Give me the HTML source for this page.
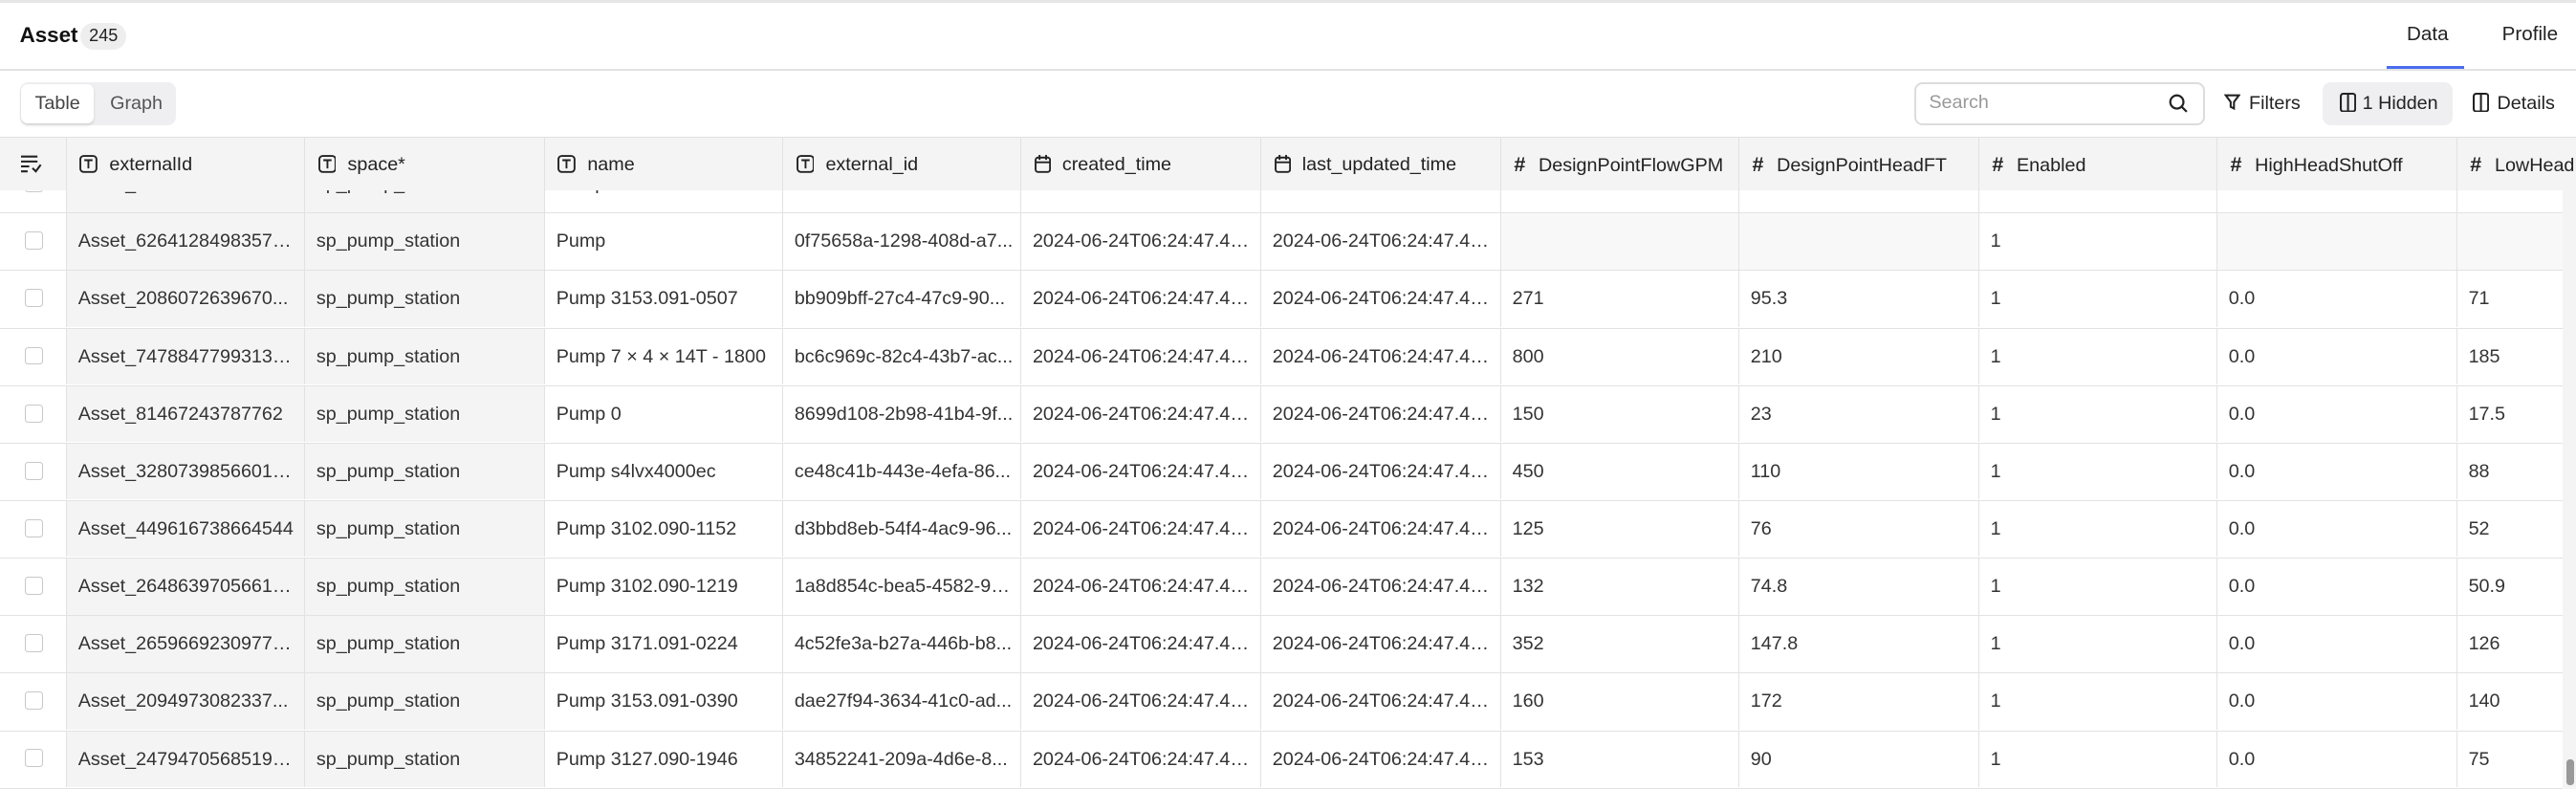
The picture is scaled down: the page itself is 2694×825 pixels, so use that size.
<!DOCTYPE html>
<html><head><meta charset="utf-8"><style>
html{zoom:1.7181}
*{box-sizing:border-box;margin:0;padding:0}
body{width:1568px;height:480px;overflow:hidden;background:#fff;font-family:"Liberation Sans",Arial,sans-serif;color:#333;position:relative;font-size:11.5px}
.abs{position:absolute}
.topline{left:0;top:0;width:1568px;height:2px;background:#e6e6e6}
.hdiv{left:0;top:42px;width:1568px;height:1px;background:#e2e2e2}
.title{left:12px;top:14px;font-size:13px;color:#111;font-weight:bold}
.badge{left:49px;top:14px;width:28px;height:16px;border-radius:8px;background:#eeeeef;font-size:10.5px;text-align:center;line-height:16px;color:#222}
.tab{top:14px;font-size:12px;color:#222}
.uline{left:1453px;top:40px;width:47px;height:2px;background:#4a6cf0}
.toggle{left:12px;top:50px;width:95px;height:26px;border-radius:5px;background:#efeff1}
.tbtn{left:13px;top:51px;width:44px;height:24px;border-radius:4px;background:#fff;box-shadow:0 1px 2px rgba(0,0,0,.12);font-size:11.5px;line-height:24px;text-align:center;color:#444}
.gbtn{left:67px;top:51px;font-size:11.5px;line-height:24px;color:#555}
.search{left:1165px;top:50px;width:177px;height:26px;border:1.5px solid #dcdcdc;border-radius:5px;font-size:11.5px;color:#999;padding:5px 8px}
.tb{top:50px;height:26px;line-height:26px;font-size:11.5px;color:#222}
.hidden{left:1414px;width:79px;background:#efeff1;border-radius:5px}
.thead{left:0;top:83px;width:1568px;height:33px;background:#f4f4f4;border-top:1px solid #e0e0e0;z-index:5}
.th{position:absolute;top:0;height:33px;line-height:33px;font-size:11.5px;color:#222;padding-left:8px;border-left:1px solid #e2e2e2;white-space:nowrap;overflow:hidden}
.th svg{vertical-align:-2px;margin-right:7px}
.row{position:absolute;left:0;width:1560px;height:35px;border-bottom:1px solid #e2e2e2}
.td{position:absolute;top:0;height:34px;line-height:34px;padding-left:7px;padding-right:4px;border-left:1px solid #e2e2e2;white-space:nowrap;overflow:hidden;text-overflow:ellipsis;font-size:11.5px;color:#333}
.g{background:#f4f4f4}
.e{background:#f8f8f8}
.cb{position:absolute;left:15px;top:11px;width:11px;height:11px;border:1px solid #c8c8c8;border-radius:2px;background:#fff}
.sb{left:1560px;top:116px;width:8px;height:364px;background:#f4f4f4}
.thumb{left:1562px;top:462px;width:5px;height:16px;background:#999;border-radius:2px}
</style></head><body>
<div class="abs topline"></div>
<div class="abs title">Asset</div>
<div class="abs badge">245</div>
<div class="abs tab" style="left:1465px">Data</div>
<div class="abs tab" style="left:1523px">Profile</div>
<div class="abs uline"></div>
<div class="abs hdiv"></div>
<div class="abs toggle"></div>
<div class="abs tbtn">Table</div>
<div class="abs gbtn">Graph</div>
<div class="abs search">Search
<svg class="abs" style="left:154px;top:6px" width="12" height="12" viewBox="0 0 12 12" fill="none" stroke="#222" stroke-width="1.3"><circle cx="5" cy="5" r="4"/><path d="M8 8l3 3"/></svg></div>
<div class="abs tb" style="left:1354px"><svg width="10" height="10" viewBox="0 0 10 10" fill="none" stroke="#222" stroke-width="1.2" style="vertical-align:-1px;margin-right:5px"><path d="M1 1h8L6 5v4L4 8V5z"/></svg>Filters</div>
<div class="abs tb hidden" style="padding-left:10px"><svg width="10" height="12" viewBox="0 0 10 12" fill="none" stroke="#222" stroke-width="1.2" style="vertical-align:-2px;margin-right:4px"><rect x=".6" y=".6" width="8.8" height="10.8" rx="1.5"/><path d="M5 1v10"/></svg>1 Hidden</div>
<div class="abs tb" style="left:1505px"><svg width="10" height="12" viewBox="0 0 10 12" fill="none" stroke="#222" stroke-width="1.2" style="vertical-align:-2px;margin-right:5px"><rect x=".6" y=".6" width="8.8" height="10.8" rx="1.5"/><path d="M5 1v10"/></svg>Details</div>

<div class="abs thead">
<div class="th" style="left:0;width:40px;border-left:none;padding-left:13px"><svg width="13" height="11" viewBox="0 0 13 11" fill="none" stroke="#222" stroke-width="1.2"><path d="M0 1h10M0 4h10M0 7h5M0 10h4M7 8l2 2 3-4"/></svg></div>
<div class="th" style="left:40px;width:145px">TICON externalId</div>
<div class="th" style="left:185px;width:146px">TICON space*</div>
<div class="th" style="left:331px;width:145px">TICON name</div>
<div class="th" style="left:476px;width:145px">TICON external_id</div>
<div class="th" style="left:621px;width:146px">CICON created_time</div>
<div class="th" style="left:767px;width:146px">CICON last_updated_time</div>
<div class="th" style="left:913px;width:145px">HICON DesignPointFlowGPM</div>
<div class="th" style="left:1058px;width:146px">HICON DesignPointHeadFT</div>
<div class="th" style="left:1204px;width:145px">HICON Enabled</div>
<div class="th" style="left:1349px;width:146px">HICON HighHeadShutOff</div>
<div class="th" style="left:1495px;width:73px">HICON LowHeadFT</div>
</div>
<div id="rows"></div>
<div class="abs sb"></div>
<div class="abs thumb"></div>
<script>
var T='<svg width="11" height="11" viewBox="0 0 11 11" fill="none" stroke="#222" stroke-width="1.1"><rect x=".6" y=".6" width="9.8" height="9.8" rx="2"/><path d="M3 3.2h5M5.5 3.2v5"/></svg>';
var C='<svg width="10" height="11" viewBox="0 0 10 11" fill="none" stroke="#222" stroke-width="1.1"><rect x=".6" y="1.6" width="8.8" height="8.8" rx="1.5"/><path d="M3 0v3M7 0v3M1 4.5h8"/></svg>';
var H='<span style="font-size:12.5px;margin-right:8px;font-weight:bold">#</span>';
document.querySelectorAll('.th').forEach(function(e){e.innerHTML=e.innerHTML.replace('TICON ',T).replace('CICON ',C).replace('HICON ',H);});
var d=[
["Asset_21483939393039...","sp_pump_station","Pump 3153.090-0377","c5e5e52b-b2bf-4fcb-8f...","2024-06-24T06:24:47.43...","2024-06-24T06:24:47.43...","310","75","1","0.0","55.4"],
["Asset_62641284983572...","sp_pump_station","Pump","0f75658a-1298-408d-a7...","2024-06-24T06:24:47.43...","2024-06-24T06:24:47.43...","","","1","",""],
["Asset_2086072639670...","sp_pump_station","Pump 3153.091-0507","bb909bff-27c4-47c9-90...","2024-06-24T06:24:47.43...","2024-06-24T06:24:47.43...","271","95.3","1","0.0","71"],
["Asset_74788477993137...","sp_pump_station","Pump 7 × 4 × 14T - 1800","bc6c969c-82c4-43b7-ac...","2024-06-24T06:24:47.43...","2024-06-24T06:24:47.43...","800","210","1","0.0","185"],
["Asset_81467243787762","sp_pump_station","Pump 0","8699d108-2b98-41b4-9f...","2024-06-24T06:24:47.43...","2024-06-24T06:24:47.43...","150","23","1","0.0","17.5"],
["Asset_32807398566017...","sp_pump_station","Pump s4lvx4000ec","ce48c41b-443e-4efa-86...","2024-06-24T06:24:47.43...","2024-06-24T06:24:47.43...","450","110","1","0.0","88"],
["Asset_449616738664544","sp_pump_station","Pump 3102.090-1152","d3bbd8eb-54f4-4ac9-96...","2024-06-24T06:24:47.43...","2024-06-24T06:24:47.43...","125","76","1","0.0","52"],
["Asset_26486397056617...","sp_pump_station","Pump 3102.090-1219","1a8d854c-bea5-4582-97...","2024-06-24T06:24:47.43...","2024-06-24T06:24:47.43...","132","74.8","1","0.0","50.9"],
["Asset_26596692309771...","sp_pump_station","Pump 3171.091-0224","4c52fe3a-b27a-446b-b8...","2024-06-24T06:24:47.43...","2024-06-24T06:24:47.43...","352","147.8","1","0.0","126"],
["Asset_2094973082337...","sp_pump_station","Pump 3153.091-0390","dae27f94-3634-41c0-ad...","2024-06-24T06:24:47.43...","2024-06-24T06:24:47.43...","160","172","1","0.0","140"],
["Asset_24794705685191...","sp_pump_station","Pump 3127.090-1946","34852241-209a-4d6e-8...","2024-06-24T06:24:47.43...","2024-06-24T06:24:47.43...","153","90","1","0.0","75"]];
var L=[40,185,331,476,621,767,913,1058,1204,1349,1495],W=[145,146,145,145,146,146,145,146,145,146,73];
var h='';
d.forEach(function(r,i){var top=95+i*35;h+='<div class="row" style="top:'+top+'px"><div class="cb"></div>';
r.forEach(function(v,j){var cls='td'+(j<2?' g':(v===''?' e':''));h+='<div class="'+cls+'" style="left:'+L[j]+'px;width:'+W[j]+'px">'+v+'</div>';});h+='</div>';});
document.getElementById('rows').innerHTML=h;
</script>
</body></html>
